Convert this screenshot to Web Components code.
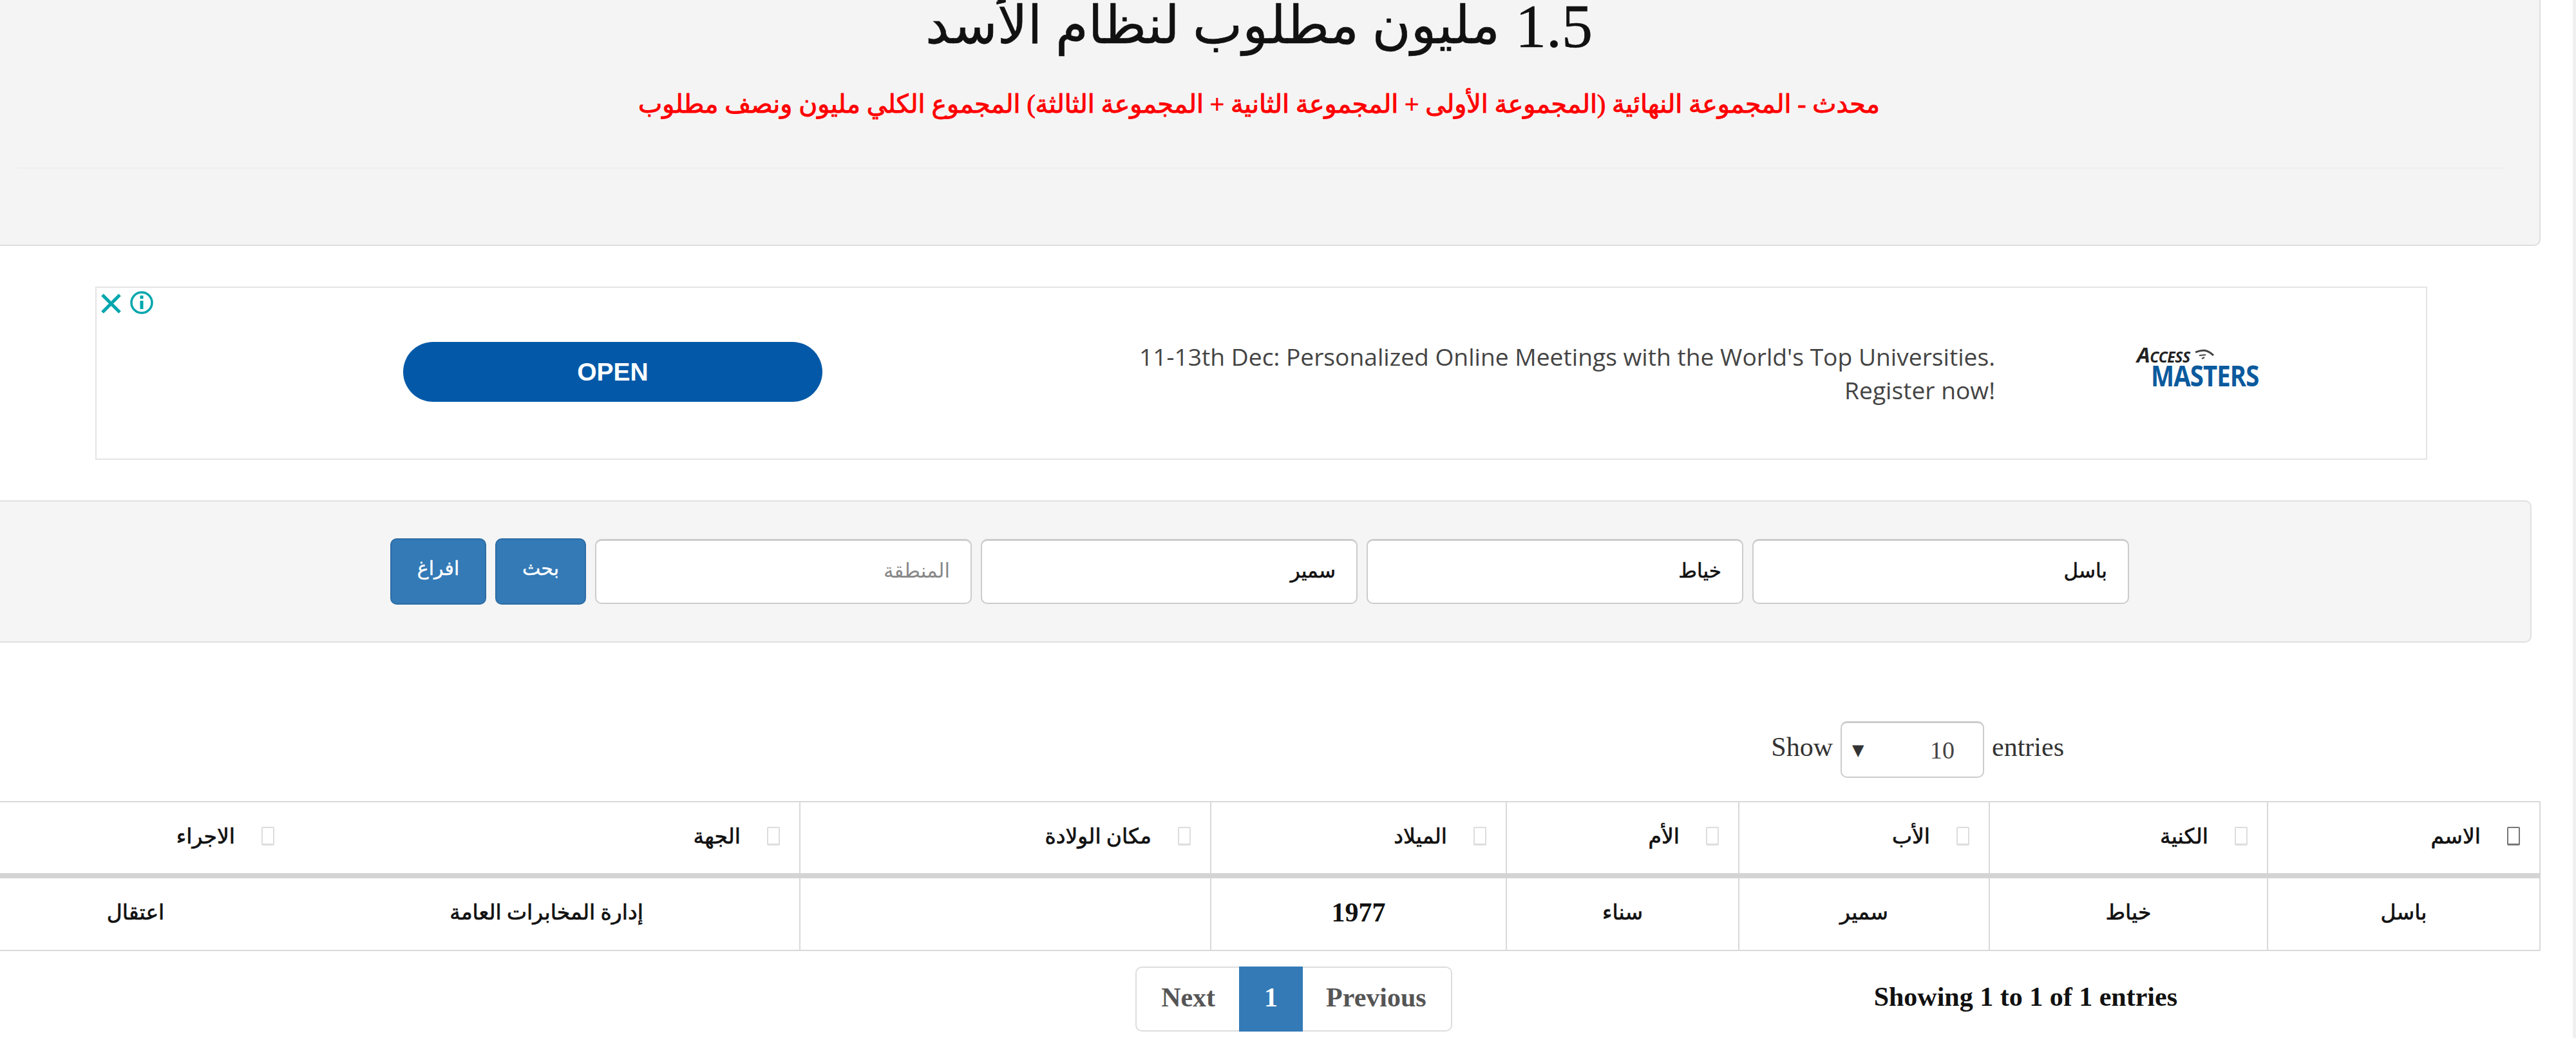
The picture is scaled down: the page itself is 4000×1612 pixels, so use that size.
<!DOCTYPE html>
<html lang="ar" dir="rtl">

<head>
	<meta charset="UTF-8">
	<title>1.5 مليون مطلوب لنظام الأسد</title>
	<style>
		html, body { margin: 0; padding: 0; background: #fff; overflow: hidden; height: 1612px; }
		body { box-sizing: border-box; width: 4000px; border-right: 5px solid #f0f0f0; font-family: "Liberation Serif", "DejaVu Sans", serif; }
		/* the page is scrolled down a little and wider than the window */
		#page { display: block; width: 3980px; margin: -18px 50px 0 -35px; }
	</style>
</head>

<body>
	<div id="page">
		<hero-banner>
			<span slot="title"><span style="font-size:96px">1.5</span> <span style="font-size:82px;vertical-align:6px">مليون مطلوب لنظام الأسد</span></span>
			<span slot="note">محدث - المجموعة النهائية (المجموعة الأولى + المجموعة الثانية + المجموعة الثالثة) المجموع الكلي مليون ونصف مطلوب</span>
		</hero-banner>

		<ad-card></ad-card>

		<search-panel>
			<search-field>باسل</search-field>
			<search-field>خياط</search-field>
			<search-field>سمير</search-field>
			<search-field placeholder>المنطقة</search-field>
			<blue-button style="width:141px">بحث</blue-button>
			<blue-button style="width:149px">افراغ</blue-button>
		</search-panel>

		<length-menu></length-menu>
		<data-table></data-table>
		<table-footer></table-footer>
	</div>

	<script>
		class HeroBanner extends HTMLElement {
			connectedCallback() {
				this.attachShadow({ mode: 'open' });
				this.shadowRoot.innerHTML = `
				<style>
					:host { display: block; margin: 0 0 63px 0; background: #f4f4f4; border: 2px solid #dedede; border-radius: 10px; height: 400px; box-sizing: border-box; text-align: center; }
					h1 { margin: 0; padding-top: 1px; font: 400 96px/110px "Liberation Serif", "DejaVu Sans", serif; color: #111; -webkit-text-stroke: .6px #111; }
					p { margin: 41px 0 0; font: 400 39.5px/50px "Liberation Serif", "DejaVu Sans", serif; color: #f00; -webkit-text-stroke: 1px #f00; }
					hr { margin: 73px 56px 0 60px; border: 0; border-top: 2px solid #ededed; }
				</style>
				<h1><slot name="title"></slot></h1>
				<p><slot name="note"></slot></p>
				<hr>`;
			}
		}
		customElements.define('hero-banner', HeroBanner);

		class AdCard extends HTMLElement {
			connectedCallback() {
				this.attachShadow({ mode: 'open' });
				this.shadowRoot.innerHTML = `
				<style>
					:host { display: flex; align-items: center; position: relative; box-sizing: border-box; width: 3621px; height: 269px; margin: 0 176px 63px auto; padding-right: 259px; background: #fff; border: 2px solid #e4e4e4; direction: rtl; }
					.logo { width: 190px; flex: none; direction: ltr; height: 66px; margin-bottom: 24px; }
					.logo i { display: flex; align-items: center; height: 31px; font: italic 700 33px/31px "Open Sans", sans-serif; font-variant: small-caps; color: #222; letter-spacing: -.5px; }
					.logo i svg { margin-left: 8px; }
					.logo b { display: block; margin-left: 22px; font: 700 44px/35px "Open Sans", sans-serif; color: #0b5a9d; letter-spacing: -1px; transform: scaleX(.87); transform-origin: left; white-space: nowrap; }
					.txt { margin-right: 220px; flex: none; width: 1340px; font: 400 37.2px/52px "Open Sans", sans-serif; color: #444; text-align: right; direction: ltr; white-space: nowrap; }
					.open { margin-right: 481px; flex: none; width: 651px; height: 93px; margin-bottom: 4px; display: flex; align-items: center; justify-content: center; background: #0359a8; border-radius: 47px; color: #fff; font: 700 39px "Liberation Sans", sans-serif; }
					svg.close { position: absolute; left: 6px; top: 3px; }
				</style>
				<div class="logo">
					<i>Access<svg width="30" height="18" viewBox="0 0 30 18" fill="none" stroke="#444"><path d="M0 6 C10 2 18 1 28 11" stroke-width="3" /><path d="M6 11 L16 10 M10 16 L14 14" stroke-width="2" /></svg></i>
					<b>MASTERS</b>
				</div>
				<div class="txt">11-13th Dec: Personalized Online Meetings with the World's Top Universities.<br>Register now!</div>
				<div class="open">OPEN</div>
				<svg class="close" width="84" height="40" viewBox="0 0 84 40" fill="none" stroke="#00a6ad">
					<path d="M3 8 L30 35 M30 8 L3 35" stroke-width="5" />
					<circle cx="64" cy="20" r="16" stroke-width="3.5" />
					<path d="M64 17 V30" stroke-width="5" />
					<path d="M64 9 V14" stroke-width="5" />
				</svg>`;
			}
		}
		customElements.define('ad-card', AdCard);

		class SearchPanel extends HTMLElement {
			connectedCallback() {
				this.attachShadow({ mode: 'open' });
				this.shadowRoot.innerHTML = `
				<style>
					:host { display: flex; align-items: center; gap: 14px; box-sizing: border-box; height: 221px; margin: 0 14px 122px 18px; padding-right: 623px; background: #f5f5f5; border: 2px solid #e0e0e0; border-radius: 10px; }
				</style>
				<slot></slot>`;
			}
		}
		customElements.define('search-panel', SearchPanel);

		class SearchField extends HTMLElement {
			connectedCallback() {
				this.attachShadow({ mode: 'open' });
				this.shadowRoot.innerHTML = `
				<style>
					:host { display: flex; align-items: center; box-sizing: border-box; width: 585px; height: 101px; padding: 0 32px 4px; background: #fff; border: 2px solid #ccc; border-top-width: 3px; border-radius: 10px; font: 400 31px "Liberation Serif", "DejaVu Sans", serif; color: #111; -webkit-text-stroke: .6px #111; }
					:host([placeholder]) { color: #888; -webkit-text-stroke: 0; }
				</style>
				<slot></slot>`;
			}
		}
		customElements.define('search-field', SearchField);

		class BlueButton extends HTMLElement {
			connectedCallback() {
				this.attachShadow({ mode: 'open' });
				this.shadowRoot.innerHTML = `
				<style>
					:host { display: flex; align-items: center; justify-content: center; box-sizing: border-box; height: 103px; padding-bottom: 10px; background: #337ab7; border: 2px solid #2e6da4; border-radius: 10px; color: #fff; font: 400 30px "Liberation Serif", "DejaVu Sans", serif; -webkit-text-stroke: .4px #fff; }
				</style>
				<slot></slot>`;
			}
		}
		customElements.define('blue-button', BlueButton);

		class LengthMenu extends HTMLElement {
			connectedCallback() {
				this.attachShadow({ mode: 'open' });
				this.shadowRoot.innerHTML = `
				<style>
					:host { display: flex; align-items: center; gap: 12px; height: 88px; padding-right: 740px; margin-bottom: 36px; direction: ltr; justify-content: flex-end; font: 400 42px "Liberation Serif", serif; color: #333; }
					:host > span { padding-bottom: 8px; }
					.box { display: flex; justify-content: space-between; align-items: center; box-sizing: border-box; width: 223px; height: 88px; padding: 0 44px 0 16px; background: #fff; border: 2px solid #ccc; border-top-width: 3px; border-radius: 10px; font-size: 38px; color: #444; }
					.arrow { font: 400 24px "DejaVu Sans", sans-serif; color: #333; }
				</style>
				<span>Show</span>
				<div class="box"><span class="arrow">▼</span><span>10</span></div>
				<span>entries</span>`;
			}
		}
		customElements.define('length-menu', LengthMenu);

		const widths = [423, 432, 389, 361, 459, 638, 786, 492];
		const heads = ['الاسم', 'الكنية', 'الأب', 'الأم', 'الميلاد', 'مكان الولادة', 'الجهة', 'الاجراء'];
		const cells = ['باسل', 'خياط', 'سمير', 'سناء', '1977', '', 'إدارة المخابرات العامة', 'اعتقال'];

		class DataTable extends HTMLElement {
			connectedCallback() {
				this.attachShadow({ mode: 'open' });
				const cols = widths.map(w => `<col style="width:${w}px">`).join('');
				const ths = heads.map((h, i) => `<th class="${i > 5 ? 'open' : ''}"><div><span class="tofu ${i == 0 ? 'on' : ''}"></span><span>${h}</span></div></th>`).join('');
				const tds = cells.map((c, i) => `<td class="${i > 5 ? 'open' : ''} ${i == 4 ? 'num' : ''}">${c}</td>`).join('');
				this.shadowRoot.innerHTML = `
				<style>
					:host { display: block; margin-bottom: 24px; }
					table { width: 3980px; table-layout: fixed; border-collapse: collapse; font: 400 33px "Liberation Serif", "DejaVu Sans", serif; color: #111; -webkit-text-stroke: .7px #111; }
					th, td { border: 2px solid #d9d9d9; padding: 0; font-weight: 400; }
					th { height: 110px; border-bottom: 8px solid #d4d4d4; }
					th.open:nth-child(7), td.open:nth-child(7) { border-left: 0; }
					th.open:nth-child(8), td.open:nth-child(8) { border-right: 0; }
					td { height: 105px; text-align: center; padding-bottom: 6px; }
					td.num { font-size: 42px; font-weight: 700; -webkit-text-stroke: 0; }
					th div { display: flex; align-items: center; gap: 41px; padding-right: 30px; padding-bottom: 6px; }
					.tofu { width: 20px; height: 29px; box-sizing: border-box; border: 2px solid #ddd; border-bottom-width: 3px; border-radius: 2px; flex: none; }
					.tofu.on { border-color: #777; }
				</style>
				<table>
					<colgroup>${cols}</colgroup>
					<thead><tr>${ths}</tr></thead>
					<tbody><tr>${tds}</tr></tbody>
				</table>`;
			}
		}
		customElements.define('data-table', DataTable);

		class TableFooter extends HTMLElement {
			connectedCallback() {
				this.attachShadow({ mode: 'open' });
				this.shadowRoot.innerHTML = `
				<style>
					:host { display: flex; align-items: center; gap: 655px; padding-right: 564px; font: 700 42px "Liberation Serif", serif; direction: rtl; }
					.info { color: #111; direction: ltr; padding-bottom: 8px; }
					nav { display: flex; direction: ltr; height: 101px; }
					nav span { display: flex; align-items: center; box-sizing: border-box; border: 2px solid #ddd; color: #555; padding: 0 38px 6px; }
					nav span:first-child { border-radius: 10px 0 0 10px; border-right: 0; padding-right: 37px; }
					nav span:last-child { border-radius: 0 10px 10px 0; border-left: 0; padding-left: 36px; }
					nav .cur { background: #337ab7; border-color: #337ab7; color: #fff; width: 99px; justify-content: center; padding: 0 0 6px; }
				</style>
				<div class="info">Showing 1 to 1 of 1 entries</div>
				<nav><span>Next</span><span class="cur">1</span><span>Previous</span></nav>`;
			}
		}
		customElements.define('table-footer', TableFooter);
	</script>
</body>

</html>
